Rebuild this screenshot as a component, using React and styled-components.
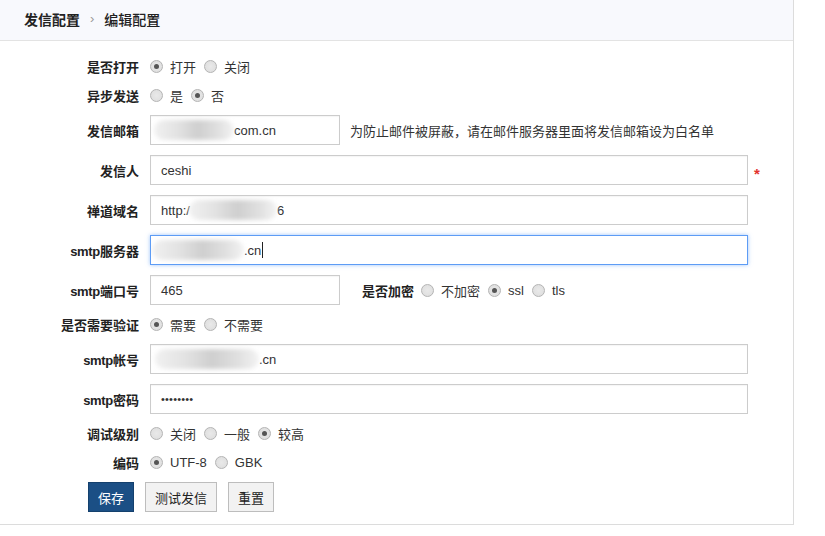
import React from "react";
import styled, { createGlobalStyle } from "styled-components";

const GlobalStyle = createGlobalStyle`
  body {
    margin: 0;
    background: #fff;
    color: #333;
    font-family: "Liberation Sans", "Noto Sans CJK SC", sans-serif;
    font-size: 13px;
  }
`;

const Panel = styled.div`
  width: 794px;
  box-sizing: border-box;
  border-right: 1px solid #dcdcdc;
  border-bottom: 1px solid #dcdcdc;
`;

const Header = styled.div`
  height: 41px;
  box-sizing: border-box;
  padding: 0 24px 3px;
  display: flex;
  align-items: center;
  gap: 10px;
  background: #f8f9fd;
  border-bottom: 1px solid #e3e3e3;
  font-size: 14px;
  color: #222;
`;

const Crumb = styled.span`
  font-weight: ${(p) => (p.$strong ? 700 : 500)};
`;

const Sep = styled.span`
  color: #999;
  font-size: 13px;
`;

const Form = styled.div`
  display: flex;
  flex-direction: column;
  gap: 10px;
  padding: 16px 0 12px;
`;

const Row = styled.div`
  display: flex;
  align-items: center;
  height: ${(p) => (p.$tall ? "30px" : "19px")};
`;

const Label = styled.span`
  width: 139px;
  margin-right: 11px;
  flex-shrink: 0;
  text-align: right;
  font-weight: 700;
  color: #222;
  white-space: nowrap;
`;

const Latin = styled.span`
  letter-spacing: -0.3px;
`;

const InlineLabel = styled.span`
  margin: 0 7px 0 22px;
  font-weight: 700;
  color: #222;
`;

const Options = styled.div`
  display: flex;
  align-items: center;
  gap: 8px;
`;

const Option = styled.label`
  display: flex;
  align-items: center;
  gap: 7px;
  color: #333;
`;

const Dot = styled.span`
  width: 13px;
  height: 13px;
  box-sizing: border-box;
  border-radius: 50%;
  border: 1px solid #b4b4b4;
  background: radial-gradient(circle, #e9e9e9 0%, #dcdcdc 100%);
  display: flex;
  align-items: center;
  justify-content: center;

  &::after {
    content: "";
    width: 5px;
    height: 5px;
    border-radius: 50%;
    background: #555;
    display: ${(p) => (p.$checked ? "block" : "none")};
  }
`;

const Field = styled.div`
  width: ${(p) => p.$w}px;
  height: 30px;
  box-sizing: border-box;
  padding: 0 10px;
  display: flex;
  align-items: center;
  border: 1px solid ${(p) => (p.$focus ? "#5d9cf5" : "#ccc")};
  box-shadow: ${(p) =>
    p.$focus ? "0 0 4px rgba(93, 156, 245, 0.6)" : "inset 0 1px 1px rgba(0,0,0,0.04)"};
  background: #fff;
  color: #333;
  white-space: nowrap;
  overflow: hidden;
`;

const Blur = styled.span`
  display: inline-block;
  width: ${(p) => p.$w}px;
  height: 20px;
  margin-left: ${(p) => p.$ml || 0}px;
  border-radius: 10px;
  background: linear-gradient(90deg, #f1f1f1, #e2e2e2 30%, #cfcfcf 55%, #e0e0e0 80%, #f3f3f3);
  filter: blur(2px);
  flex-shrink: 0;
`;

const Caret = styled.span`
  width: 1px;
  height: 16px;
  margin-left: 1px;
  background: #222;
`;

const Secret = styled.span`
  font-size: 11px;
  letter-spacing: 0.2px;
  color: #333;
`;

const Hint = styled.span`
  margin-left: 10px;
  color: #333;
`;

const Star = styled.span`
  margin: 6px 0 0 6px;
  color: #e2332e;
  font-size: 15px;
  font-weight: 700;
`;

const Buttons = styled.div`
  display: flex;
  gap: 11px;
  padding-left: 88px;
`;

const Button = styled.button`
  height: 30px;
  padding: 0 9px;
  font-family: inherit;
  font-size: 13px;
  border: 1px solid ${(p) => (p.$primary ? "#14406d" : "#bdbdbd")};
  background: ${(p) => (p.$primary ? "#1b4f85" : "#f2f2f2")};
  color: ${(p) => (p.$primary ? "#fff" : "#222")};
  cursor: pointer;
`;

function Radios({ items, value }) {
  return (
    <Options>
      {items.map((it) => (
        <Option key={it}>
          <Dot $checked={it === value} />
          {it}
        </Option>
      ))}
    </Options>
  );
}

export default function App() {
  return (
    <>
      <GlobalStyle />
      <Panel>
        <Header>
          <Crumb $strong>发信配置</Crumb>
          <Sep>›</Sep>
          <Crumb>编辑配置</Crumb>
        </Header>
        <Form>
          <Row>
            <Label>是否打开</Label>
            <Radios items={["打开", "关闭"]} value="打开" />
          </Row>
          <Row>
            <Label>异步发送</Label>
            <Radios items={["是", "否"]} value="否" />
          </Row>
          <Row $tall>
            <Label>发信邮箱</Label>
            <Field $w={190}>
              <Blur $w={80} $ml={-7} />
              com.cn
            </Field>
            <Hint>为防止邮件被屏蔽，请在邮件服务器里面将发信邮箱设为白名单</Hint>
          </Row>
          <Row $tall>
            <Label>发信人</Label>
            <Field $w={598}>ceshi</Field>
            <Star>*</Star>
          </Row>
          <Row $tall>
            <Label>禅道域名</Label>
            <Field $w={598}>
              http:/
              <Blur $w={88} $ml={-1} />
              6
            </Field>
          </Row>
          <Row $tall>
            <Label><Latin>smtp</Latin>服务器</Label>
            <Field $w={598} $focus>
              <Blur $w={92} $ml={-9} />
              .cn
              <Caret />
            </Field>
          </Row>
          <Row $tall>
            <Label><Latin>smtp</Latin>端口号</Label>
            <Field $w={190}>465</Field>
            <InlineLabel>是否加密</InlineLabel>
            <Radios items={["不加密", "ssl", "tls"]} value="ssl" />
          </Row>
          <Row>
            <Label>是否需要验证</Label>
            <Radios items={["需要", "不需要"]} value="需要" />
          </Row>
          <Row $tall>
            <Label><Latin>smtp</Latin>帐号</Label>
            <Field $w={598}>
              <Blur $w={104} $ml={-6} />
              .cn
            </Field>
          </Row>
          <Row $tall>
            <Label><Latin>smtp</Latin>密码</Label>
            <Field $w={598}>
              <Secret>••••••••</Secret>
            </Field>
          </Row>
          <Row>
            <Label>调试级别</Label>
            <Radios items={["关闭", "一般", "较高"]} value="较高" />
          </Row>
          <Row>
            <Label>编码</Label>
            <Radios items={["UTF-8", "GBK"]} value="UTF-8" />
          </Row>
          <Buttons>
            <Button $primary>保存</Button>
            <Button>测试发信</Button>
            <Button>重置</Button>
          </Buttons>
        </Form>
      </Panel>
    </>
  );
}
